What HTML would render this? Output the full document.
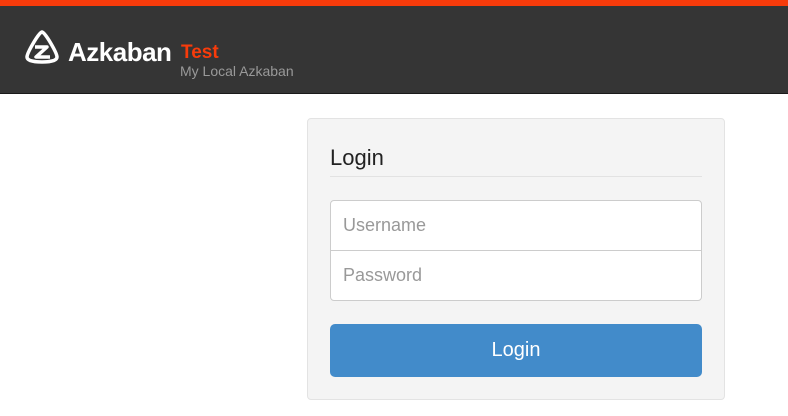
<!DOCTYPE html>
<html><head><meta charset="utf-8"><style>
body{margin:0;width:788px;height:416px;background:#fff;font-family:"Liberation Sans",sans-serif;position:relative;overflow:hidden}
.top{position:absolute;left:0;top:0;width:788px;height:6px;background:#f73b0b}
.hdr{position:absolute;left:0;top:6px;width:788px;height:87px;background:#353535;border-bottom:1px solid #1a1a1a}
.az{position:absolute;left:68px;top:31px;color:#fff;font-weight:bold;font-size:26px;letter-spacing:-0.5px}
.test{position:absolute;left:181px;top:36px;color:#f73b0b;font-weight:bold;font-size:19px}
.sub{position:absolute;left:180px;top:57px;color:#999;font-size:14px}
.panel{position:absolute;left:307px;top:118px;width:416px;height:280px;background:#f4f4f4;border:1px solid #e3e3e3;border-radius:4px}
.h{position:absolute;left:330px;top:145px;font-size:22px;color:#222}
.hr{position:absolute;left:330px;top:176px;width:372px;height:1px;background:#e2e2e2}
.in{position:absolute;left:330px;width:370px;height:49px;background:#fff;border:1px solid #ccc;color:#999;font-size:18px;line-height:49px;box-sizing:content-box}
.in span{padding-left:12px}
.btn{position:absolute;left:330px;top:324px;width:372px;height:53px;background:#428bca;border-radius:5px;color:#fff;font-size:20px;text-align:center;line-height:53px}
</style></head><body>
<div class="top"></div>
<div class="hdr">
<svg style="position:absolute;left:23px;top:23px" width="38" height="36" viewBox="0 0 38 36">
<path d="M19 3 C16 3 4 24 4 28 C4 32 12 33 19 33 C26 33 34 32 34 28 C34 24 22 3 19 3 Z" fill="none" stroke="#fff" stroke-width="3.5" stroke-linejoin="round"/>
<path d="M12 18 L24 18 L13 28 L27 28" fill="none" stroke="#fff" stroke-width="3.5" stroke-linejoin="round"/>
</svg>
<div class="az">Azkaban</div>
<div class="test">Test</div>
<div class="sub">My Local Azkaban</div>
</div>
<div class="panel"></div>
<div class="h">Login</div>
<div class="hr"></div>
<div class="in" style="top:200px;border-radius:4px 4px 0 0"><span>Username</span></div>
<div class="in" style="top:250px;border-radius:0 0 4px 4px"><span>Password</span></div>
<div class="btn">Login</div>
</body></html>
